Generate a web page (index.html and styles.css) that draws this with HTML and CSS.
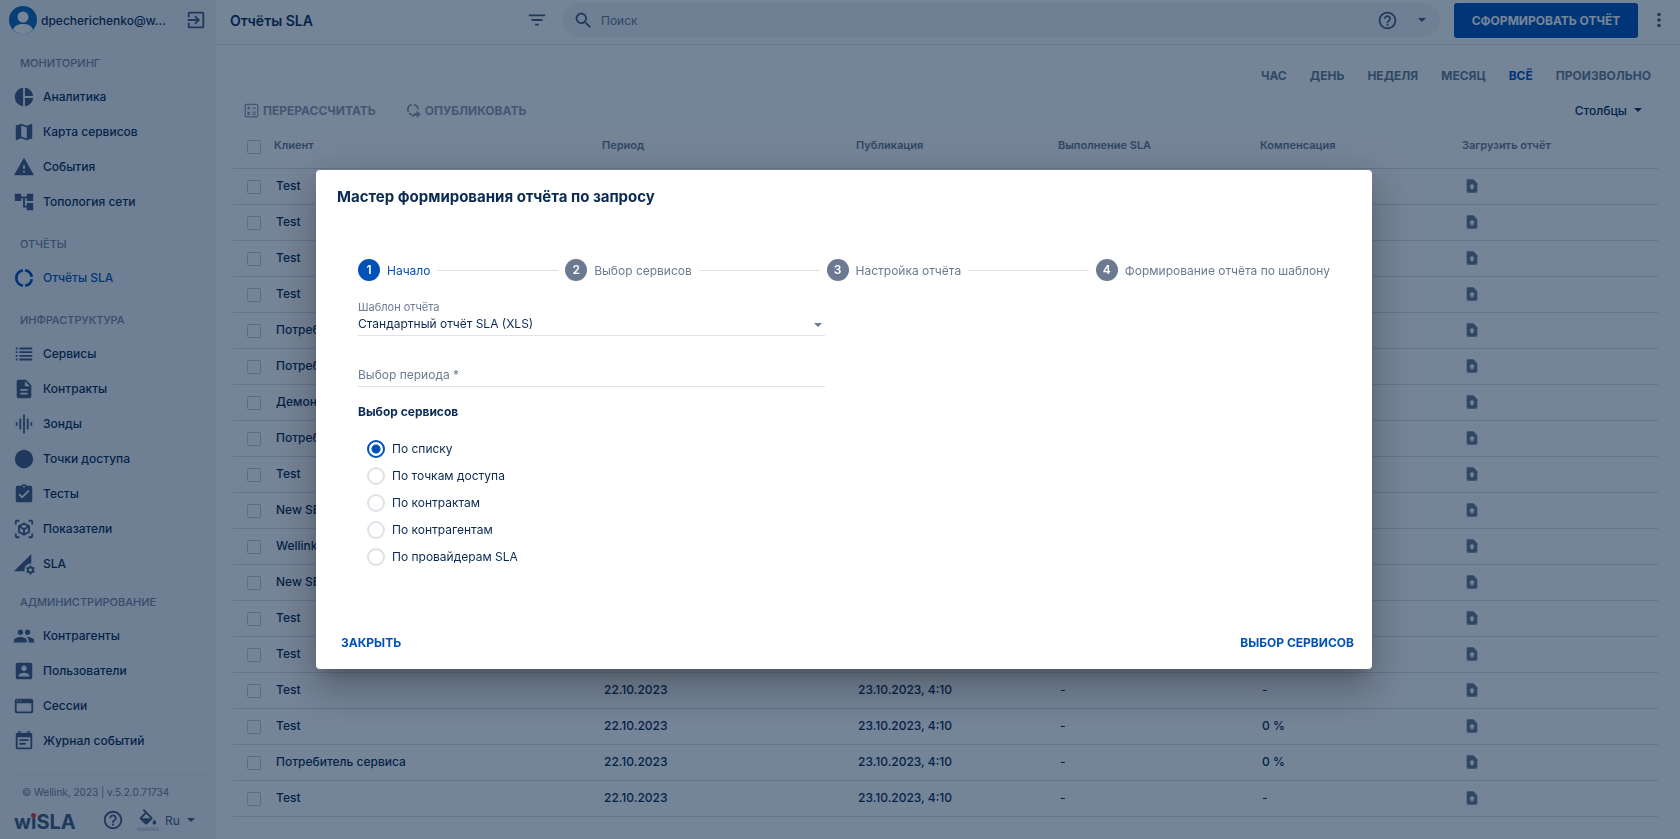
FILE: index.html
```html
<!DOCTYPE html>
<html lang="ru">
<head>
  <meta charset="utf-8">
  <title>Отчёты SLA</title>
  <link rel="stylesheet" href="styles.css">
</head>
<body>

  <!-- Icon sprite -->
  <svg class="sprite" aria-hidden="true">
    <symbol id="i-pie" viewBox="0 0 24 24"><path d="M11 2v20c-5.07-.5-9-4.79-9-10s3.93-9.5 9-10zm2.03 0v8.99H22c-.47-4.74-4.24-8.52-8.97-8.99zm0 11.01V22c4.74-.47 8.5-4.25 8.97-8.99h-8.97z"/></symbol>
    <symbol id="i-map" viewBox="0 0 24 24"><path d="M20.5 3l-.16.03L15 5.1 9 3 3.36 4.9c-.21.07-.36.25-.36.48V20.5c0 .28.22.5.5.5l.16-.03L9 18.9l6 2.1 5.64-1.9c.21-.07.36-.25.36-.48V3.5c0-.28-.22-.5-.5-.5zM15 19l-6-2.11V5l6 2.11V19z"/></symbol>
    <symbol id="i-warning" viewBox="0 0 24 24"><path d="M1 21h22L12 2 1 21zm12-3h-2v-2h2v2zm0-4h-2v-4h2v4z"/></symbol>
    <symbol id="i-tree" viewBox="0 0 24 24"><path d="M22 11V3h-7v3H9V3H2v8h7V8h2v10h4v3h7v-8h-7v3h-2V8h2v3z"/></symbol>
    <symbol id="i-donut" viewBox="0 0 24 24"><path fill="none" stroke="currentColor" stroke-width="3" d="M13.2 3.6a8.5 8.5 0 0 1 7.2 7.2M20.4 13.2a8.5 8.5 0 0 1-7.2 7.2M10.8 20.4a8.5 8.5 0 0 1 0-16.8"/></symbol>
    <symbol id="i-list" viewBox="0 0 24 24"><path d="M3 5h2v2H3zM7 5h14v2H7zM3 9h2v2H3zM7 9h14v2H7zM3 13h2v2H3zM7 13h14v2H7zM3 17h2v2H3zM7 17h14v2H7z"/></symbol>
    <symbol id="i-doc" viewBox="0 0 24 24"><path d="M14 2H6c-1.1 0-1.99.9-1.99 2L4 20c0 1.1.89 2 1.99 2H18c1.1 0 2-.9 2-2V8l-6-6zm2 16H8v-2h8v2zm0-4H8v-2h8v2zm-3-5V3.5L18.5 9H13z"/></symbol>
    <symbol id="i-eq" viewBox="0 0 24 24"><path d="M7 18h2V6H7v12zm4 4h2V2h-2v20zm-8-8h2v-4H3v4zm12 4h2V6h-2v12zm4-8v4h2v-4h-2z"/></symbol>
    <symbol id="i-dot" viewBox="0 0 24 24"><circle cx="12" cy="12" r="10"/></symbol>
    <symbol id="i-task" viewBox="0 0 24 24"><path d="M19 3h-4.18C14.4 1.84 13.3 1 12 1c-1.3 0-2.4.84-2.82 2H5c-1.1 0-2 .9-2 2v14c0 1.1.9 2 2 2h14c1.1 0 2-.9 2-2V5c0-1.1-.9-2-2-2zm-7 0c.55 0 1 .45 1 1s-.45 1-1 1-1-.45-1-1 .45-1 1-1zm-2 14l-4-4 1.41-1.41L10 14.17l6.59-6.59L18 9l-8 8z"/></symbol>
    <symbol id="i-cube" viewBox="0 0 24 24"><g fill="none" stroke="currentColor" stroke-width="2"><path d="M3 7V4a1 1 0 0 1 1-1h3M17 3h3a1 1 0 0 1 1 1v3M21 17v3a1 1 0 0 1-1 1h-3M7 21H4a1 1 0 0 1-1-1v-3"/><path d="M12 6l5.5 3.1v6L12 18.2l-5.5-3.1v-6zM6.5 9.1L12 12.2l5.5-3.1M12 12.2v6"/></g></symbol>
    <symbol id="i-sla" viewBox="0 0 24 24"><path d="M20 1v10.500a7 7 0 0 0-7.500 8.500H1z"/><circle cx="19" cy="18.500" r="2.800" fill="none" stroke="currentColor" stroke-width="2"/><path fill="none" stroke="currentColor" stroke-width="2" d="M19 13.500v2M19 21.500v2M14.700 16l1.700 1M21.600 20l1.700 1M14.700 21l1.700-1M21.600 17l1.700-1"/></symbol>
    <symbol id="i-people" viewBox="0 0 24 24"><path d="M16 11c1.66 0 2.99-1.34 2.99-3S17.66 5 16 5c-1.66 0-3 1.34-3 3s1.34 3 3 3zm-8 0c1.66 0 2.99-1.34 2.99-3S9.66 5 8 5C6.34 5 5 6.34 5 8s1.34 3 3 3zm0 2c-2.33 0-7 1.17-7 3.5V19h14v-2.5c0-2.33-4.67-3.5-7-3.5zm8 0c-.29 0-.62.02-.97.05 1.16.84 1.97 1.97 1.97 3.45V19h6v-2.5c0-2.33-4.67-3.5-7-3.5z"/></symbol>
    <symbol id="i-user" viewBox="0 0 24 24"><path d="M3 5v14c0 1.1.89 2 2 2h14c1.1 0 2-.9 2-2V5c0-1.1-.9-2-2-2H5c-1.11 0-2 .9-2 2zm12 4c0 1.66-1.34 3-3 3s-3-1.34-3-3 1.34-3 3-3 3 1.34 3 3zm-9 8c0-2 4-3.1 6-3.1s6 1.1 6 3.1v1H6v-1z"/></symbol>
    <symbol id="i-window" viewBox="0 0 24 24"><path fill-rule="evenodd" d="M4 4h16a2 2 0 0 1 2 2v12a2 2 0 0 1-2 2H4a2 2 0 0 1-2-2V6a2 2 0 0 1 2-2zm0 5v9h16V9zM4 6v1h1.500V6zm3.500 0v1H9V6z"/></symbol>
    <symbol id="i-note" viewBox="0 0 24 24"><path d="M17 10H7v2h10v-2zm2-7h-1V1h-2v2H8V1H6v2H5c-1.11 0-1.99.9-1.99 2L3 19c0 1.1.89 2 2 2h14c1.1 0 2-.9 2-2V5c0-1.1-.9-2-2-2zm0 16H5V8h14v11zm-5-5H7v2h7v-2z"/></symbol>
    <symbol id="i-exit" viewBox="0 0 24 24"><path d="M10.09 15.59L11.5 17l5-5-5-5-1.41 1.41L12.67 11H3v2h9.67l-2.58 2.59zM19 3H5c-1.11 0-2 .9-2 2v4h2V5h14v14H5v-4H3v4c0 1.1.89 2 2 2h14c1.1 0 2-.9 2-2V5c0-1.1-.9-2-2-2z"/></symbol>
    <symbol id="i-help" viewBox="0 0 24 24"><path d="M11 18h2v-2h-2v2zm1-16C6.48 2 2 6.48 2 12s4.48 10 10 10 10-4.48 10-10S17.52 2 12 2zm0 18c-4.41 0-8-3.59-8-8s3.59-8 8-8 8 3.59 8 8-3.59 8-8 8zm0-14c-2.21 0-4 1.79-4 4h2c0-1.1.9-2 2-2s2 .9 2 2c0 2-3 1.75-3 5h2c0-2.25 3-2.5 3-5 0-2.21-1.79-4-4-4z"/></symbol>
    <symbol id="i-filter" viewBox="0 0 24 24"><path d="M10 18h4v-2h-4v2zM3 6v2h18V6H3zm3 7h12v-2H6v2z"/></symbol>
    <symbol id="i-search" viewBox="0 0 24 24"><path d="M15.5 14h-.79l-.28-.27C15.41 12.59 16 11.11 16 9.5 16 5.91 13.09 3 9.5 3S3 5.91 3 9.5 5.91 16 9.5 16c1.61 0 3.09-.59 4.23-1.57l.27.28v.79l5 4.99L20.49 19l-4.99-5zm-6 0C7.01 14 5 11.99 5 9.5S7.01 5 9.5 5 14 7.01 14 9.5 11.99 14 9.5 14z"/></symbol>
    <symbol id="i-more" viewBox="0 0 24 24"><circle cx="12" cy="6" r="2"/><circle cx="12" cy="12" r="2"/><circle cx="12" cy="18" r="2"/></symbol>
    <symbol id="i-caret" viewBox="0 0 10 5"><path d="M0 0h10L5 5z"/></symbol>
    <symbol id="i-fill" viewBox="0 0 24 24"><path d="M16.56 8.94L7.62 0 6.21 1.41l2.38 2.38-5.15 5.15c-.59.59-.59 1.54 0 2.12l5.5 5.5c.29.29.68.44 1.06.44s.77-.15 1.06-.44l5.5-5.5c.59-.58.59-1.53 0-2.12zM5.21 10L10 5.21 14.79 10H5.21zM19 11.5s-2 2.17-2 3.5c0 1.1.9 2 2 2s2-.9 2-2c0-1.33-2-3.5-2-3.5z"/><path opacity=".2" d="M0 20h24v4H0z"/></symbol>
    <symbol id="i-calc" viewBox="0 0 24 24"><g fill="none" stroke="currentColor" stroke-width="2"><rect x="2" y="2" width="20" height="20" rx="1.500"/><path d="M5 8h5M7.500 5.500v5M13.500 8H19M13.500 14.500H19M13.500 18H19M5.500 14.500l4 4M9.500 14.500l-4 4"/></g></symbol>
    <symbol id="i-publish" viewBox="0 0 24 24"><path fill="none" stroke="currentColor" stroke-width="3" d="M9 2.500a8 8 0 0 0-5 12M5 16a8 8 0 0 0 4.500 3M12.500 2.500a8 8 0 0 1 6.500 7.500"/><path d="M17 12l7 6-7 6v-3.500c-3.500 0-6 1-8 3 .5-4.500 3.500-7.500 8-8z"/></symbol>
    <symbol id="i-upload" viewBox="0 0 24 24"><path fill-rule="evenodd" d="M14 2H6a2 2 0 0 0-2 2v16a2 2 0 0 0 2 2h12a2 2 0 0 0 2-2V8zM12 8.500l4.500 4.500H14v4h-4v-4H7.500z"/></symbol>
  </svg>

  <div class="app">

    <aside class="sidebar">
      <div class="account">
        <svg class="avatar" viewBox="0 0 28 28">
          <circle cx="14" cy="14" r="14" fill="#0f6ab8"/>
          <circle cx="14" cy="11" r="5.500" fill="#fff"/>
          <path d="M4 23.500c2-4.500 6-5.500 10-5.500s8 1 10 5.500A14 14 0 0 1 14 28 14 14 0 0 1 4 23.500z" fill="#fff"/>
        </svg>
        <span class="account-name">dpecherichenko@w...</span>
        <button class="icon-btn" aria-label="Выйти"><svg class="icon"><use href="#i-exit"/></svg></button>
      </div>

      <nav class="nav">
        <h2 class="nav-title">МОНИТОРИНГ</h2>
        <a class="nav-item" href="#"><svg class="icon"><use href="#i-pie"/></svg>Аналитика</a>
        <a class="nav-item" href="#"><svg class="icon"><use href="#i-map"/></svg>Карта сервисов</a>
        <a class="nav-item" href="#"><svg class="icon"><use href="#i-warning"/></svg>События</a>
        <a class="nav-item" href="#"><svg class="icon"><use href="#i-tree"/></svg>Топология сети</a>

        <h2 class="nav-title">ОТЧЁТЫ</h2>
        <a class="nav-item active" href="#"><svg class="icon"><use href="#i-donut"/></svg>Отчёты SLA</a>

        <h2 class="nav-title">ИНФРАСТРУКТУРА</h2>
        <a class="nav-item" href="#"><svg class="icon"><use href="#i-list"/></svg>Сервисы</a>
        <a class="nav-item" href="#"><svg class="icon"><use href="#i-doc"/></svg>Контракты</a>
        <a class="nav-item" href="#"><svg class="icon"><use href="#i-eq"/></svg>Зонды</a>
        <a class="nav-item" href="#"><svg class="icon"><use href="#i-dot"/></svg>Точки доступа</a>
        <a class="nav-item" href="#"><svg class="icon"><use href="#i-task"/></svg>Тесты</a>
        <a class="nav-item" href="#"><svg class="icon"><use href="#i-cube"/></svg>Показатели</a>
        <a class="nav-item" href="#"><svg class="icon"><use href="#i-sla"/></svg>SLA</a>

        <h2 class="nav-title nav-title-tight">АДМИНИСТРИРОВАНИЕ</h2>
        <a class="nav-item" href="#"><svg class="icon"><use href="#i-people"/></svg>Контрагенты</a>
        <a class="nav-item" href="#"><svg class="icon"><use href="#i-user"/></svg>Пользователи</a>
        <a class="nav-item" href="#"><svg class="icon"><use href="#i-window"/></svg>Сессии</a>
        <a class="nav-item" href="#"><svg class="icon"><use href="#i-note"/></svg>Журнал событий</a>
      </nav>

      <footer class="side-footer">
        <p class="copyright">© Wellink, 2023 | v.5.2.0.71734</p>
        <div class="side-tools">
          <span class="logo">w<span class="logo-i">i</span>SLA</span>
          <button class="icon-btn" aria-label="Помощь"><svg class="icon"><use href="#i-help"/></svg></button>
          <button class="icon-btn" aria-label="Тема"><svg class="icon"><use href="#i-fill"/></svg></button>
          <button class="lang">Ru <svg class="caret"><use href="#i-caret"/></svg></button>
        </div>
      </footer>
    </aside>

    <main class="main">
      <header class="topbar">
        <h1 class="page-title">Отчёты SLA</h1>
        <button class="icon-btn" aria-label="Фильтр"><svg class="icon"><use href="#i-filter"/></svg></button>
        <div class="search">
          <svg class="icon"><use href="#i-search"/></svg>
          <input class="search-input" type="text" placeholder="Поиск" aria-label="Поиск">
          <button class="icon-btn" aria-label="Справка"><svg class="icon"><use href="#i-help"/></svg></button>
          <button class="icon-btn" aria-label="Параметры поиска"><svg class="caret"><use href="#i-caret"/></svg></button>
        </div>
        <button class="btn-primary">СФОРМИРОВАТЬ ОТЧЁТ</button>
        <button class="icon-btn" aria-label="Ещё"><svg class="icon"><use href="#i-more"/></svg></button>
      </header>

      <div class="periods">
        <button class="period">ЧАС</button>
        <button class="period">ДЕНЬ</button>
        <button class="period">НЕДЕЛЯ</button>
        <button class="period">МЕСЯЦ</button>
        <button class="period active">ВСЁ</button>
        <button class="period">ПРОИЗВОЛЬНО</button>
      </div>

      <div class="actions">
        <button class="action"><svg class="action-icon"><use href="#i-calc"/></svg>ПЕРЕРАССЧИТАТЬ</button>
        <button class="action"><svg class="action-icon"><use href="#i-publish"/></svg>ОПУБЛИКОВАТЬ</button>
        <button class="columns-btn">Столбцы <svg class="caret"><use href="#i-caret"/></svg></button>
      </div>

      <table class="reports">
        <colgroup>
          <col class="col-check"><col><col class="col-period">
          <col class="col-data"><col class="col-data"><col class="col-data"><col class="col-data">
        </colgroup>
        <thead>
          <tr>
            <th><input type="checkbox" class="check" aria-label="Выбрать все"></th>
            <th>Клиент</th><th>Период</th><th>Публикация</th><th>Выполнение SLA</th><th>Компенсация</th><th>Загрузить отчёт</th>
          </tr>
        </thead>
        <tbody id="rows"></tbody>
      </table>
    </main>
  </div>

  <div class="backdrop">
    <section class="dialog" role="dialog" aria-labelledby="dialog-title">
      <h2 class="dialog-title" id="dialog-title">Мастер формирования отчёта по запросу</h2>

      <div class="dialog-body">
        <ol class="stepper">
          <li class="step active"><span class="step-num">1</span>Начало</li>
          <li class="step-line"></li>
          <li class="step"><span class="step-num">2</span>Выбор сервисов</li>
          <li class="step-line"></li>
          <li class="step"><span class="step-num">3</span>Настройка отчёта</li>
          <li class="step-line"></li>
          <li class="step"><span class="step-num">4</span>Формирование отчёта по шаблону</li>
        </ol>

        <div class="fields">
          <div class="field">
            <label class="field-label" for="template">Шаблон отчёта</label>
            <div class="select-wrap">
              <select class="field-input" id="template"><option>Стандартный отчёт SLA (XLS)</option></select>
              <svg class="caret"><use href="#i-caret"/></svg>
            </div>
          </div>
          <input class="field-input field-period" type="text" placeholder="Выбор периода *" aria-label="Выбор периода">
        </div>

        <fieldset class="choices">
          <legend class="choices-title">Выбор сервисов</legend>
          <label class="choice"><input type="radio" name="by" class="radio" checked>По списку</label>
          <label class="choice"><input type="radio" name="by" class="radio">По точкам доступа</label>
          <label class="choice"><input type="radio" name="by" class="radio">По контрактам</label>
          <label class="choice"><input type="radio" name="by" class="radio">По контрагентам</label>
          <label class="choice"><input type="radio" name="by" class="radio">По провайдерам SLA</label>
        </fieldset>
      </div>

      <div class="dialog-actions">
        <button class="btn-text">ЗАКРЫТЬ</button>
        <button class="btn-text">ВЫБОР СЕРВИСОВ</button>
      </div>
    </section>
  </div>

  <script src="reports.js"></script>
</body>
</html>
```

FILE: styles.css
```css
* { box-sizing: border-box; }

body {
  margin: 0;
  font-family: Inter, "Liberation Sans", sans-serif;
  font-size: 12px;
  color: #0a2a52;
  background: #fff;
}

h1, h2, p, ol, fieldset { margin: 0; padding: 0; }

button {
  font-family: inherit;
  font-size: 12px;
  color: inherit;
  background: none;
  border: none;
  padding: 0;
  cursor: pointer;
}

svg { fill: currentColor; flex-shrink: 0; }

.sprite { position: absolute; width: 0; height: 0; }

.icon { display: block; width: 22px; height: 22px; color: #44587c; }
.caret { width: 8px; height: 4px; color: #44587c; }
.icon-btn { display: flex; align-items: center; justify-content: center; }

.app { display: flex; height: 100vh; overflow: hidden; }

/* Sidebar */
.sidebar {
  display: flex;
  flex-direction: column;
  width: 216px;
  flex-shrink: 0;
  background: #f3f4f6;
}

.account {
  display: flex;
  align-items: center;
  height: 40px;
  padding: 0 9px;
  gap: 4px;
}
.avatar { width: 28px; height: 28px; }
.account-name { flex: 1; font-weight: 500; }

.nav { flex: 1; padding-top: 8px; }
.nav-title {
  height: 31px;
  line-height: 31px;
  padding-left: 20px;
  margin-top: 10px;
  font-size: 11px;
  font-weight: 500;
  color: #75839b;
}
.nav-title:first-child { margin-top: 0; }
.nav-title-tight { margin-top: 6px; }
.nav-item {
  display: flex;
  align-items: center;
  gap: 8px;
  height: 35px;
  padding-left: 13px;
  font-weight: 500;
  color: inherit;
  text-decoration: none;
}
.nav-item.active, .nav-item.active .icon { color: #0052b8; }

.side-footer {
  margin: 0 8px 0 12px;
  padding-bottom: 5px;
  border-top: 1px solid #e4e6ec;
}
.copyright {
  padding: 10px 0 6px 10px;
  font-size: 10px;
  line-height: 15px;
  color: #6b7a91;
}
.side-tools { display: flex; align-items: center; height: 28px; padding-left: 2px; }
.logo {
  align-self: flex-end;
  width: 88px;
  font-size: 20px;
  font-weight: 700;
  line-height: 24px;
  color: #44587c;
}
.logo-i { position: relative; }
.logo-i::after {
  content: "";
  position: absolute;
  left: 0;
  top: 3px;
  width: 5px;
  height: 5px;
  border-radius: 50%;
  background: #f5333f;
}
.side-tools .icon-btn { margin-right: 13px; }
.side-tools .icon-btn + .icon-btn { margin-right: 6px; }
.lang { display: flex; align-items: center; gap: 7px; color: #44587c; }

/* Top bar */
.main { flex: 1; min-width: 0; }
.topbar {
  display: flex;
  align-items: center;
  height: 45px;
  padding: 0 10px 4px 14px;
  border-bottom: 1px solid #e4e6ec;
}
.page-title { width: 296px; font-size: 14px; font-weight: 600; }
.search {
  display: flex;
  align-items: center;
  flex: 1;
  height: 34px;
  margin: 0 14px 0 15px;
  padding: 0 14px 0 10px;
  border-radius: 17px;
  background: #f3f4f6;
}
.search .icon:first-child { width: 21px; height: 21px; }
.search-input {
  flex: 1;
  padding: 0 7px;
  font: inherit;
  background: none;
  border: none;
}
.search-input::placeholder { color: #6b7a91; opacity: 1; }
.search .icon-btn + .icon-btn { margin-left: 20px; }
.btn-primary {
  width: 184px;
  height: 35px;
  border-radius: 3px;
  font-weight: 700;
  color: #fff;
  background: #0052b8;
  white-space: nowrap;
}
.topbar .btn-primary + .icon-btn { margin-left: 10px; }

/* Filters over the table */
.periods {
  display: flex;
  justify-content: flex-end;
  gap: 23px;
  padding: 20px 29px 0 0;
}
.period { height: 20px; font-weight: 700; color: #6b7a91; }
.period.active { color: #0052b8; }
.actions {
  display: flex;
  align-items: center;
  gap: 30px;
  height: 20px;
  margin: 15px 38px 0 28px;
}
.action { display: flex; align-items: center; gap: 4px; font-weight: 700; color: #909bb0; }
.action-icon { width: 15px; height: 15px; }
.columns-btn { display: flex; align-items: center; gap: 7px; margin-left: auto; font-weight: 500; }
.columns-btn .caret { color: inherit; }

/* Reports table */
.reports {
  width: calc(100% - 39px);
  margin: 5px 22px 0 17px;
  border-collapse: collapse;
  table-layout: fixed;
}
.col-check { width: 35px; }
.col-period { width: 254px; }
.col-data { width: 202px; }
.reports th, .reports td {
  height: 36px;
  padding: 0 0 2px 8px;
  text-align: left;
  font-weight: 500;
  border-bottom: 1px solid #dadee6;
  white-space: nowrap;
  overflow: hidden;
}
.reports th {
  height: 43px;
  padding-left: 6px;
  font-size: 11px;
  font-weight: 600;
  color: #6b7a91;
}
.reports th:first-child, .reports td:first-child { padding: 1px 0 0 14px; }
.check {
  appearance: none;
  display: block;
  width: 14px;
  height: 14px;
  margin: 0;
  border: 1px solid #c4cbdb;
  border-radius: 2px;
}
.reports td:last-child { padding-bottom: 0; }
.file-link { display: block; color: #6b7a91; }
.file-icon { display: block; width: 16px; height: 16px; }

/* Report wizard */
.backdrop {
  position: fixed;
  inset: 0;
  display: flex;
  align-items: center;
  justify-content: center;
  padding-left: 8px;
  background: rgba(0, 29, 64, .54);
}
.dialog {
  width: 100%;
  max-width: 1056px;
  padding: 17px 16px 16px 21px;
  border-radius: 4px;
  background: #fff;
  box-shadow: 0 11px 15px -7px rgba(0, 0, 0, .2), 0 24px 38px 3px rgba(0, 0, 0, .14), 0 9px 46px 8px rgba(0, 0, 0, .12);
}
.dialog-title { font-size: 15px; font-weight: 700; line-height: 20px; }
.dialog-body { padding: 52px 26px 0 21px; }

.stepper { display: flex; align-items: center; list-style: none; }
.step { display: flex; align-items: center; gap: 7px; color: #6b7a91; }
.step.active { color: #0052b8; }
.step-num {
  width: 22px;
  height: 22px;
  border-radius: 50%;
  font-weight: 600;
  line-height: 22px;
  text-align: center;
  color: #fff;
  background: #6b7a91;
}
.step.active .step-num { background: #0052b8; }
.step-line { flex: 1; height: 1px; margin: 0 7px; background: #dfe1e6; }

.fields { width: 48%; }
.field { padding-top: 19px; }
.field-label { display: block; font-size: 11px; line-height: 15px; color: #6b7a91; }
.select-wrap { position: relative; }
.select-wrap .caret { position: absolute; right: 3px; top: 8px; color: #6b7a91; }
.field-input {
  display: block;
  width: 100%;
  height: 21px;
  padding: 0 0 4px;
  font: inherit;
  color: inherit;
  appearance: none;
  background: none;
  border: none;
  border-bottom: 1px solid #dfe1e6;
  border-radius: 0;
}
.field-input::placeholder { color: #6b7a91; opacity: 1; }
.field-period { margin-top: 30px; }

.choices { border: none; padding-top: 13px; }
.choices-title { padding: 15px 0 0; line-height: 20px; font-weight: 700; }
.choice { display: flex; align-items: center; gap: 7px; height: 27px; padding-left: 9px; }
.radio {
  appearance: none;
  width: 18px;
  height: 18px;
  margin: 0;
  border: 2px solid #dfe1e6;
  border-radius: 50%;
}
.radio:checked {
  border-color: #0052b8;
  background: radial-gradient(circle, #0052b8 4px, transparent 5px);
}

.dialog-actions { display: flex; justify-content: space-between; padding-top: 61px; }
.btn-text { height: 22px; padding: 0 2px 0 4px; font-weight: 700; color: #0052b8; }
```

FILE: reports.js
```js
const reports = [
  ['Test', '22.10.2023', '23.10.2023, 4:10', '-', '-'],
  ['Test', '22.10.2023', '23.10.2023, 4:10', '-', '-'],
  ['Test', '22.10.2023', '23.10.2023, 4:10', '-', '-'],
  ['Test', '22.10.2023', '23.10.2023, 4:10', '-', '-'],
  ['Потребитель сервиса', '22.10.2023', '23.10.2023, 4:10', '-', '0 %'],
  ['Потребитель сервиса', '22.10.2023', '23.10.2023, 4:10', '-', '0 %'],
  ['Демонстрация', '22.10.2023', '23.10.2023, 4:10', '-', '-'],
  ['Потребитель сервиса', '22.10.2023', '23.10.2023, 4:10', '-', '0 %'],
  ['Test', '22.10.2023', '23.10.2023, 4:10', '-', '-'],
  ['New SERVICE', '22.10.2023', '23.10.2023, 4:10', '-', '-'],
  ['Wellink', '22.10.2023', '23.10.2023, 4:10', '-', '-'],
  ['New SERVICE', '22.10.2023', '23.10.2023, 4:10', '-', '-'],
  ['Test', '22.10.2023', '23.10.2023, 4:10', '-', '-'],
  ['Test', '22.10.2023', '23.10.2023, 4:10', '-', '-'],
  ['Test', '22.10.2023', '23.10.2023, 4:10', '-', '-'],
  ['Test', '22.10.2023', '23.10.2023, 4:10', '-', '0 %'],
  ['Потребитель сервиса', '22.10.2023', '23.10.2023, 4:10', '-', '0 %'],
  ['Test', '22.10.2023', '23.10.2023, 4:10', '-', '-']
];

document.getElementById('rows').innerHTML = reports.map((row) => `
  <tr>
    <td><input type="checkbox" class="check" aria-label="Выбрать отчёт"></td>
    ${row.map((cell) => `<td>${cell}</td>`).join('')}
    <td><a class="file-link" href="#" aria-label="Загрузить"><svg class="file-icon"><use href="#i-upload"/></svg></a></td>
  </tr>`).join('');
```
